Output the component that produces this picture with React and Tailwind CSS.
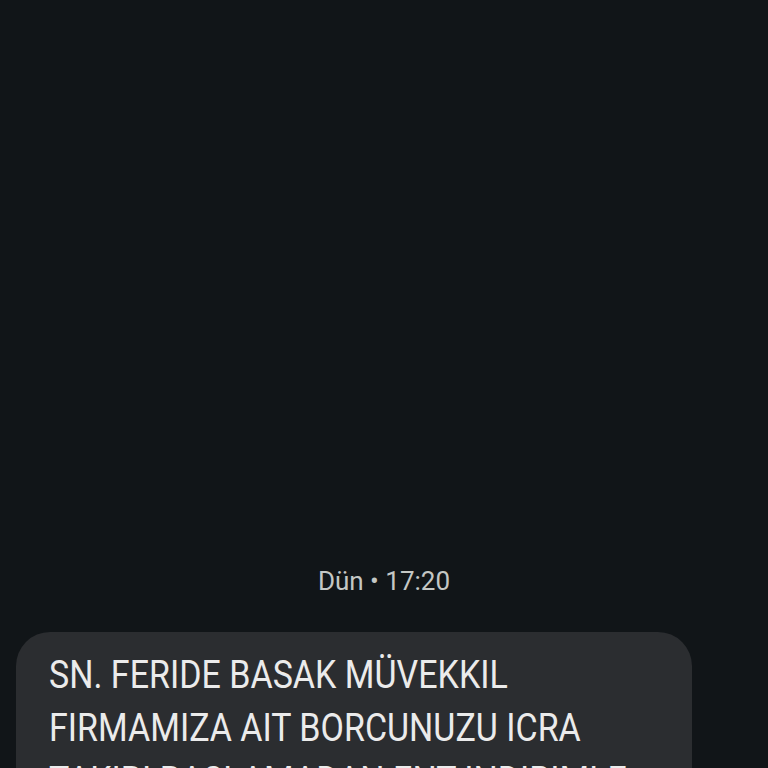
export default function App() {
  return (
    <div className="h-[768px] w-[768px] overflow-hidden bg-[#111518] flex flex-col pt-[564px]" style={{ fontFamily: "Roboto, 'Noto Sans', sans-serif" }}>
      <div className="shrink-0 text-center text-[26px] leading-[34px] text-[#c4c7c5]">Dün • 17:20</div>
      <div className="shrink-0 mt-[34px] ml-4 w-[676px] rounded-[34px] bg-[#2b2d30] pl-[33px] pr-6 pt-[17px] pb-6 overflow-hidden">
        <p className="w-[692px] origin-left scale-x-[0.895] text-[38px] leading-[53px] text-[#ebebeb]">
          SN. FERIDE BASAK MÜVEKKIL FIRMAMIZA AIT BORCUNUZU ICRA TAKIBI BASLAMADAN ENT INDIRIMLE ODEMENIZ ICIN SON GUN
        </p>
      </div>
    </div>
  );
}
